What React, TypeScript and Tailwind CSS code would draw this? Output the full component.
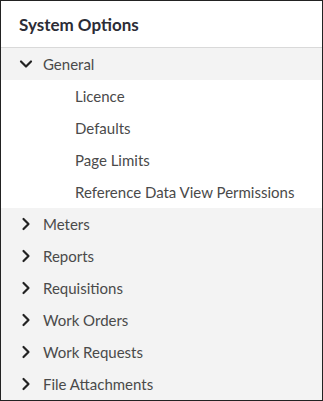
import { ChevronDown, ChevronRight } from "lucide-react";

const collapsed = ["Meters", "Reports", "Requisitions", "Work Orders", "Work Requests", "File Attachments"];
const general = ["Licence", "Defaults", "Page Limits", "Reference Data View Permissions"];

export default function App() {
    return (
        <div className="w-[323px] h-[401px] bg-white border border-[#222] flex flex-col overflow-hidden font-['Lato',sans-serif]">
            <div className="h-[47px] shrink-0 flex items-center px-[18px] border-b border-[#d9d9d9]">
                <h2 className="text-[17px] font-bold text-[#2c2c36] pt-[1px]">System Options</h2>
            </div>

            {/* General, expanded */}
            <div className="h-8 shrink-0 bg-[#f3f3f3] flex items-center pl-[15px] gap-[7px] text-[15px] text-[#4a4a4a]">
                <ChevronDown size={20} strokeWidth={2.6} className="text-[#222]" />
                <span>General</span>
            </div>
            {general.map((g) => (
                <div key={g} className="h-8 shrink-0 flex items-center pl-[74px] text-[15px] text-[#4a4a4a]">
                    {g}
                </div>
            ))}

            <div className="flex-1 bg-[#f3f3f3] flex flex-col">
                {collapsed.map((c) => (
                    <div key={c} className="h-8 shrink-0 flex items-center pl-[15px] gap-[7px] text-[15px] text-[#4a4a4a]">
                        <ChevronRight size={20} strokeWidth={2.6} className="text-[#222]" />
                        <span>{c}</span>
                    </div>
                ))}
            </div>
        </div>
    );
}
